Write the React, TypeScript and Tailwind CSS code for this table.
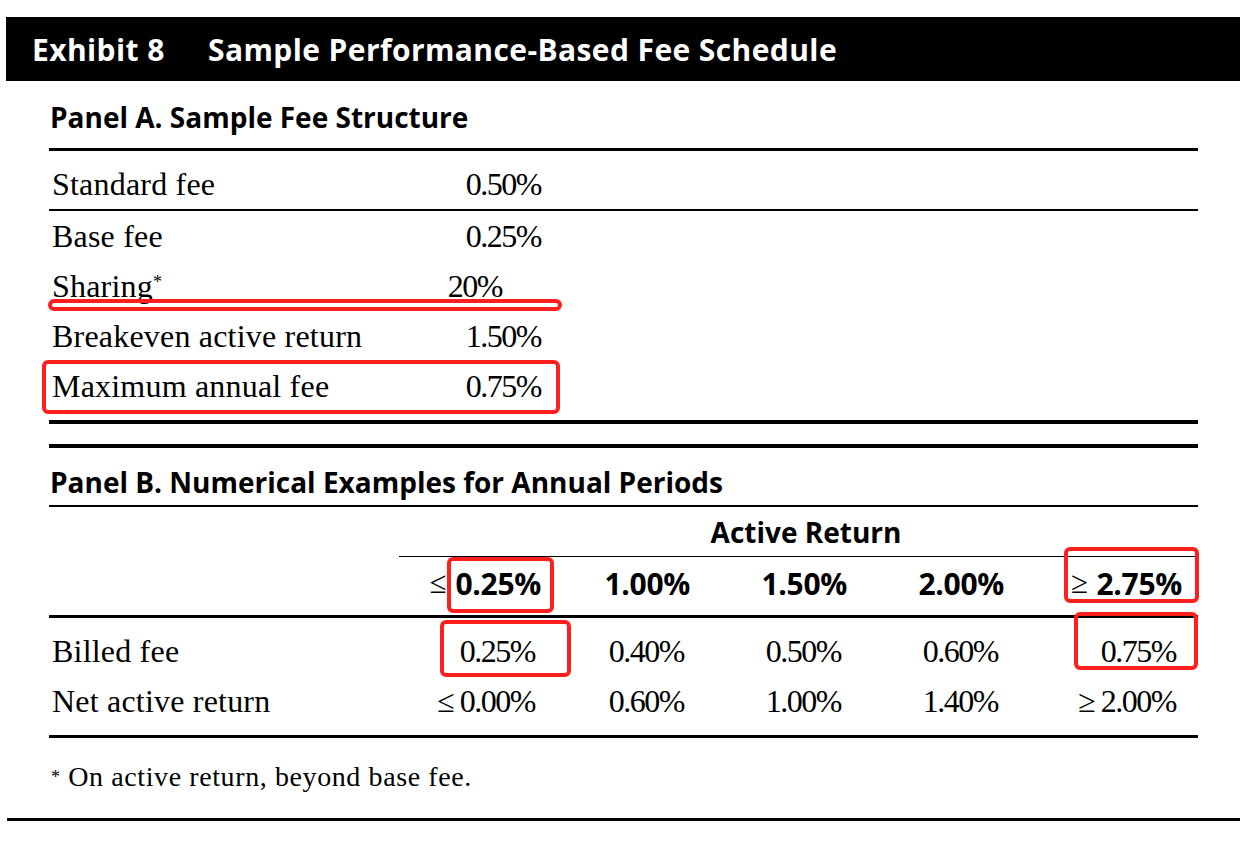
const feeRows = [
  { label: "Base fee", value: "0.25%" },
  { label: "Sharing*", value: "20%", shift: true },
  { label: "Breakeven active return", value: "1.50%" },
  { label: "Maximum annual fee", value: "0.75%" },
];

const heads = [
  { sym: "≤", val: "0.25%" },
  { sym: "", val: "1.00%" },
  { sym: "", val: "1.50%" },
  { sym: "", val: "2.00%" },
  { sym: "≥", val: "2.75%" },
];

const examples = [
  { label: "Billed fee", values: ["0.25%", "0.40%", "0.50%", "0.60%", "0.75%"] },
  { label: "Net active return", values: ["≤ 0.00%", "0.60%", "1.00%", "1.40%", "≥ 2.00%"] },
];

const sans = "font-['Open_Sans',sans-serif]";
const serif = "font-['Liberation_Serif',serif]";

function Mark({ className }: { className: string }) {
  return <div className={`absolute border-[4px] border-[#ff1f1f] ${className}`} />;
}

export default function App() {
  return (
    <div className="relative h-[844px] w-[1245px] overflow-hidden bg-white text-black">
      {/* exhibit banner */}
      <div className={`ml-[6px] mr-[5px] mt-[17px] flex h-[64px] items-center bg-black pl-[26px] text-[30px] font-bold tracking-[0.4px] text-white ${sans}`}>
        <span className="w-[176px]">Exhibit 8</span>
        <span>Sample Performance-Based Fee Schedule</span>
      </div>

      <div className="ml-[49px] w-[1149px]">
        {/* Panel A */}
        <div className={`flex h-[67px] items-center pl-[1px] pt-[5px] text-[28px] font-bold ${sans}`}>
          Panel A. Sample Fee Structure
        </div>
        <div className="h-[3px] bg-black" />

        <div className={`text-[32px] leading-[50px] tracking-[0.2px] ${serif}`}>
          <div className="flex pl-[3px] pt-[8px]">
            <span className="w-[377px]">Standard fee</span>
            <span className="w-[112px] text-right tracking-[-1.5px]">0.50%</span>
          </div>
          <div className="h-[2px] bg-black" />
          {feeRows.map((r) => (
            <div key={r.label} className="flex pl-[3px]">
              <span className="w-[377px]">
                {r.label.endsWith("*") ? (
                  <>
                    {r.label.slice(0, -1)}
                    <sup className="text-[18px]">*</sup>
                  </>
                ) : (
                  r.label
                )}
              </span>
              <span className={`w-[112px] text-right tracking-[-1.5px] ${r.shift ? "pr-[39px]" : ""}`}>{r.value}</span>
            </div>
          ))}
        </div>

        <div className="mt-[9px] h-[4px] bg-black" />
        <div className="mt-[20px] h-[4px] bg-black" />

        {/* Panel B */}
        <div className={`flex h-[57px] items-center pl-[1px] pt-[10px] text-[28px] font-bold ${sans}`}>
          Panel B. Numerical Examples for Annual Periods
        </div>
        <div className="h-[2px] bg-black" />

        <div className="grid grid-cols-[350px_158px_149px_157px_157px_178px]">
          <div />
          <div className={`col-span-5 flex h-[50px] items-center justify-center border-b border-black pl-[15px] text-[28px] font-bold ${sans}`}>
            Active Return
          </div>

          <div className="h-[58px]" />
          {heads.map((h) => (
            <div key={h.val} className={`flex h-[58px] items-center justify-end pb-[6px] pr-[16px] text-[30px] font-bold tracking-[-0.3px] ${sans}`}>
              {h.sym && <span className={`mr-[9px] text-[31px] font-normal ${serif}`}>{h.sym}</span>}
              {h.val}
            </div>
          ))}
        </div>
        <div className="h-[3px] bg-black" />

        <div className={`grid grid-cols-[350px_158px_149px_157px_157px_178px] pt-[8px] text-[32px] leading-[50px] ${serif}`}>
          {examples.map((row) => (
            <div key={row.label} className="contents">
              <div className="pl-[3px] tracking-[0.2px]">{row.label}</div>
              {row.values.map((v, i) => (
                <div key={i} className="pr-[22px] text-right tracking-[-1.5px]">
                  {v}
                </div>
              ))}
            </div>
          ))}
        </div>

        <div className="mt-[9px] h-[3px] bg-black" />
        <div className={`mt-[19px] pl-[2px] text-[28px] leading-[40px] tracking-[0.6px] ${serif}`}>
          <span className="text-[18px] align-top">*</span> On active return, beyond base fee.
        </div>
      </div>

      <div className="ml-[7px] mr-[5px] mt-[21px] h-[3px] bg-black" />

      {/* red highlight marks */}
      <Mark className="left-[48px] top-[299px] h-[12px] w-[514px] rounded-full" />
      <Mark className="left-[42px] top-[360px] h-[54px] w-[518px] rounded-[6px]" />
      <Mark className="left-[447px] top-[557px] h-[56px] w-[107px] rounded-[6px]" />
      <Mark className="left-[440px] top-[620px] h-[57px] w-[131px] rounded-[6px]" />
      <Mark className="left-[1064px] top-[547px] h-[56px] w-[135px] rounded-[6px]" />
      <Mark className="left-[1074px] top-[612px] h-[58px] w-[124px] rounded-[6px]" />
    </div>
  );
}
